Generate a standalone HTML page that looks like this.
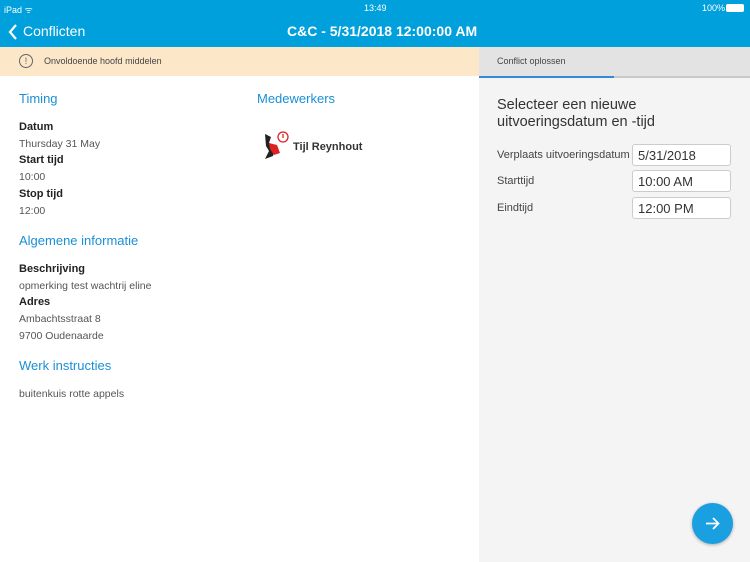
<!DOCTYPE html>
<html><head><meta charset="utf-8"><style>
*{margin:0;padding:0;box-sizing:border-box}
body{width:750px;height:562px;overflow:hidden;font-family:"Liberation Sans",sans-serif;background:#fff;position:relative}
.a{position:absolute;white-space:nowrap}
.h{color:#1a8fd6;font-size:13px}
.l{color:#222;font-size:11px;font-weight:bold}
.v{color:#555;font-size:10.5px}
.inp{position:absolute;left:632px;width:99px;height:22px;border:1px solid #ccc;border-radius:3px;background:#fff;font-size:13px;color:#333;padding:3px 0 0 5px}
.lb{position:absolute;left:497px;font-size:11px;color:#444}
</style></head><body>
<div class="a" style="left:0;top:0;width:750px;height:47px;background:#00a0dc"></div>
<div class="a" style="left:4px;top:3px;font-size:9px;color:#fff">iPad ᯤ</div>
<div class="a" style="left:364px;top:3px;font-size:9px;color:#fff">13:49</div>
<div class="a" style="left:702px;top:3px;font-size:9px;color:#fff">100%</div>
<div class="a" style="left:726px;top:4px;width:18px;height:8px;background:#fff;border-radius:2px"></div>
<svg class="a" style="left:8px;top:24px" width="10" height="16"><path d="M8 1L2 8l6 7" stroke="#fff" stroke-width="2.2" fill="none"/></svg>
<div class="a" style="left:23px;top:23px;font-size:14px;color:#fff">Conflicten</div>
<div class="a" style="left:287px;top:23px;font-size:14px;color:#fff;font-weight:bold">C&amp;C - 5/31/2018 12:00:00 AM</div>
<div class="a" style="left:0;top:47px;width:479px;height:29px;background:#fce7c8"></div>
<div class="a" style="left:19px;top:54px;width:14px;height:14px;border:1.3px solid #666;border-radius:50%;font-size:9px;color:#666;text-align:center;line-height:12px">!</div>
<div class="a" style="left:44px;top:56px;font-size:9px;color:#444">Onvoldoende hoofd middelen</div>
<div class="a" style="left:479px;top:47px;width:271px;height:515px;background:#f4f4f4"></div>
<div class="a" style="left:479px;top:47px;width:271px;height:29px;background:#e3e3e3"></div>
<div class="a" style="left:479px;top:76px;width:135px;height:2px;background:#3a86d8"></div>
<div class="a" style="left:614px;top:76px;width:136px;height:2px;background:#c8c8c8"></div>
<div class="a" style="left:497px;top:56px;font-size:9px;color:#444">Conflict oplossen</div>
<div class="a h" style="left:19px;top:91px">Timing</div>
<div class="a l" style="left:19px;top:121px">Datum</div>
<div class="a v" style="left:19px;top:138px">Thursday 31 May</div>
<div class="a l" style="left:19px;top:154px">Start tijd</div>
<div class="a v" style="left:19px;top:171px">10:00</div>
<div class="a l" style="left:19px;top:188px">Stop tijd</div>
<div class="a v" style="left:19px;top:205px">12:00</div>
<div class="a h" style="left:19px;top:233px">Algemene informatie</div>
<div class="a l" style="left:19px;top:263px">Beschrijving</div>
<div class="a v" style="left:19px;top:280px">opmerking test wachtrij eline</div>
<div class="a l" style="left:19px;top:296px">Adres</div>
<div class="a v" style="left:19px;top:313px">Ambachtsstraat 8</div>
<div class="a v" style="left:19px;top:330px">9700 Oudenaarde</div>
<div class="a h" style="left:19px;top:358px">Werk instructies</div>
<div class="a v" style="left:19px;top:388px">buitenkuis rotte appels</div>
<div class="a h" style="left:257px;top:91px">Medewerkers</div>
<svg class="a" style="left:259px;top:130px" width="32" height="32"><path d="M6 4l6 3-2 6 6 3-2 10-8 3 4-8-3-5z" fill="#222"/><path d="M10 13l8 2 3 8-6 2-4-6z" fill="#d22"/><circle cx="24" cy="7" r="5" fill="#fff" stroke="#d22" stroke-width="1.3"/><path d="M24 4v4" stroke="#d22" stroke-width="1.3"/></svg>
<div class="a" style="left:293px;top:141px;font-size:11px;color:#333;font-weight:bold">Tijl Reynhout</div>
<div class="a" style="left:497px;top:97px;font-size:14.5px;color:#333;line-height:17px">Selecteer een nieuwe<br>uitvoeringsdatum en -tijd</div>
<div class="lb" style="top:149px">Verplaats uitvoeringsdatum</div>
<div class="lb" style="top:175px">Starttijd</div>
<div class="lb" style="top:202px">Eindtijd</div>
<div class="inp" style="top:144px">5/31/2018</div>
<div class="inp" style="top:170px">10:00 AM</div>
<div class="inp" style="top:197px">12:00 PM</div>
<div class="a" style="left:692px;top:503px;width:41px;height:41px;border-radius:50%;background:#1a9fe0;box-shadow:0 1px 3px rgba(0,0,0,.3)"></div>
<svg class="a" style="left:704px;top:515px" width="17" height="17"><path d="M2 8.5h12M9 3l5.5 5.5L9 14" stroke="#fff" stroke-width="1.8" fill="none"/></svg>
</body></html>
